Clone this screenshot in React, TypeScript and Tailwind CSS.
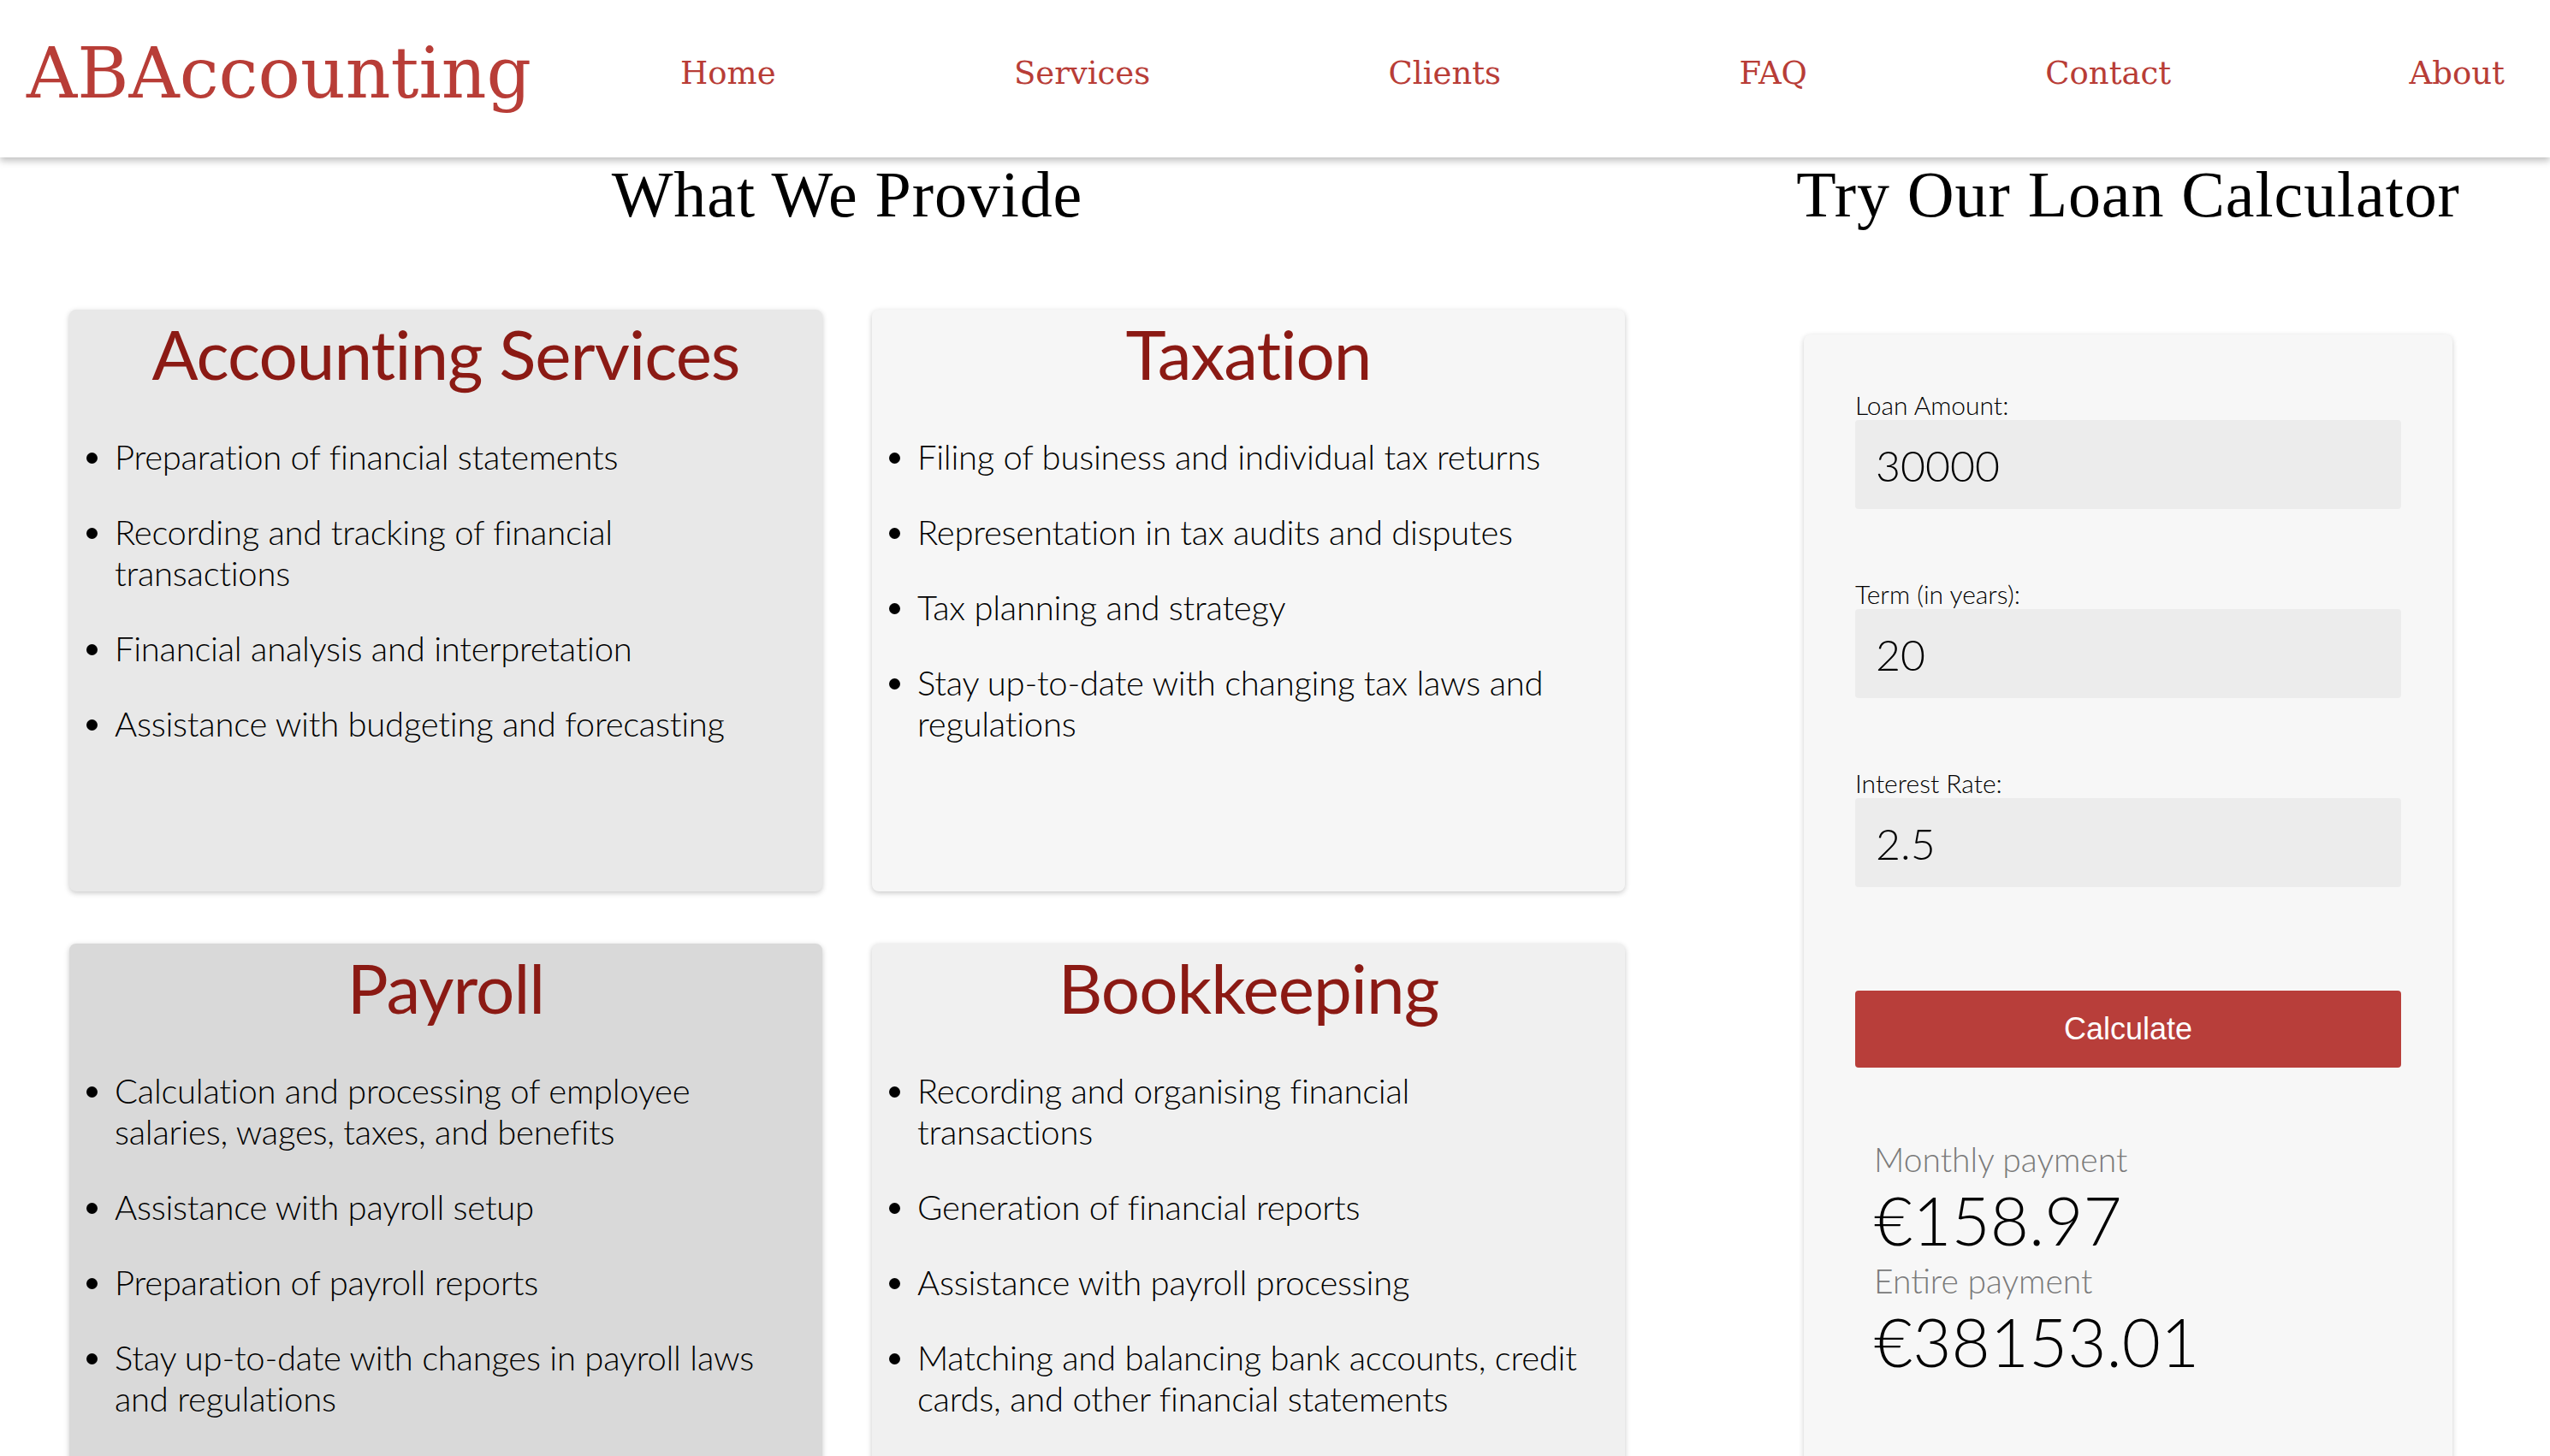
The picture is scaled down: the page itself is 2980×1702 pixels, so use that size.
import { FC } from 'react';

interface ServiceCard {
  title: string;
  bg: string;
  items: string[];
}

const navLinks = ['Home', 'Services', 'Clients', 'FAQ', 'Contact', 'About'];

const services: ServiceCard[] = [
  {
    title: 'Accounting Services',
    bg: 'bg-[#e8e8e8]',
    items: [
      'Preparation of financial statements',
      'Recording and tracking of financial transactions',
      'Financial analysis and interpretation',
      'Assistance with budgeting and forecasting',
    ],
  },
  {
    title: 'Taxation',
    bg: 'bg-[#f6f6f6]',
    items: [
      'Filing of business and individual tax returns',
      'Representation in tax audits and disputes',
      'Tax planning and strategy',
      'Stay up-to-date with changing tax laws and regulations',
    ],
  },
  {
    title: 'Payroll',
    bg: 'bg-[#d9d9d9]',
    items: [
      'Calculation and processing of employee salaries, wages, taxes, and benefits',
      'Assistance with payroll setup',
      'Preparation of payroll reports',
      'Stay up-to-date with changes in payroll laws and regulations',
    ],
  },
  {
    title: 'Bookkeeping',
    bg: 'bg-[#f0f0f0]',
    items: [
      'Recording and organising financial transactions',
      'Generation of financial reports',
      'Assistance with payroll processing',
      'Matching and balancing bank accounts, credit cards, and other financial statements',
    ],
  },
];

const fields = [
  { label: 'Loan Amount:', value: '30000' },
  { label: 'Term (in years):', value: '20' },
  { label: 'Interest Rate:', value: '2.5' },
];

const Card: FC<{ card: ServiceCard }> = ({ card }) => (
  <div
    className={`${card.bg} min-h-[680px] rounded-lg pt-[3px] shadow-[0_2px_6px_rgba(0,0,0,0.22)]`}
  >
    <h2 className="text-center text-[80px] font-normal leading-[1.2] tracking-[-1px] text-[#8b1a14]">
      {card.title}
    </h2>
    <ul className="mt-[49px] list-disc pl-[53px] pr-[45px] text-[40px] font-light leading-[48px] tracking-[-0.25px] text-black">
      {card.items.map((item) => (
        <li key={item} className="mb-[40px]">
          {item}
        </li>
      ))}
    </ul>
  </div>
);

const App: FC = () => {
  // values are just the defaults the form shows after calculating
  const monthly = '€158.97';
  const total = '€38153.01';

  return (
    <div className="min-h-screen bg-white font-['Lato',sans-serif]">
      <nav className="relative z-10 flex h-[184px] items-center bg-white pb-[12px] pl-[31px] pr-[53px] shadow-[0_4px_8px_rgba(0,0,0,0.25)] font-['DejaVu_Serif',serif] text-[#b83d37]">
        <a className="text-[82px] leading-none">ABAccounting</a>
        <ul className="ml-[174px] flex flex-1 justify-between text-[37px]">
          {navLinks.map((link) => (
            <li key={link}>
              <a>{link}</a>
            </li>
          ))}
        </ul>
      </nav>

      <main className="flex">
        <section className="flex w-[1980px] shrink-0 flex-col items-center">
          <h1 className="font-['Liberation_Serif',serif] text-[76px] leading-[1.15] tracking-[0.9px] text-black">
            What We Provide
          </h1>
          <div className="mt-[91px] grid grid-cols-[880px_880px] gap-x-[58px] gap-y-[61px]">
            {services.map((card) => (
              <Card key={card.title} card={card} />
            ))}
          </div>
        </section>

        <section className="flex flex-1 flex-col items-center pl-[14px]">
          <h1 className="font-['Liberation_Serif',serif] text-[76px] leading-[1.15] tracking-[0.9px] text-black">
            Try Our Loan Calculator
          </h1>
          <div className="mt-[120px] w-[758px] rounded-lg bg-[#f7f7f7] px-[60px] pb-[200px] pt-[64px] font-light shadow-[0_2px_6px_rgba(0,0,0,0.2)]">
            {fields.map((field) => (
              <div key={field.label} className="mb-[81px]">
                <label className="block text-[30px] leading-[36px] text-black">
                  {field.label}
                </label>
                <input
                  type="text"
                  defaultValue={field.value}
                  className="h-[104px] w-full rounded bg-[#ececec] pl-[24px] pt-[2px] font-['Lato',sans-serif] text-[50px] font-light text-black outline-none"
                />
              </div>
            ))}
            <button
              type="button"
              className="mt-[40px] h-[90px] w-full rounded bg-[#b83e3a] font-['Liberation_Sans',sans-serif] text-[36px] font-normal text-white"
            >
              Calculate
            </button>
            <div className="mt-[84px] pl-[22px]">
              <p className="text-[39px] leading-[1.2] text-[#7a7a7a]">Monthly payment</p>
              <p className="text-[78px] leading-[1.22] text-black">{monthly}</p>
              <p className="text-[39px] leading-[1.2] text-[#7a7a7a]">Entire payment</p>
              <p className="text-[78px] leading-[1.22] text-black">{total}</p>
            </div>
          </div>
        </section>
      </main>
    </div>
  );
};

export default App;
